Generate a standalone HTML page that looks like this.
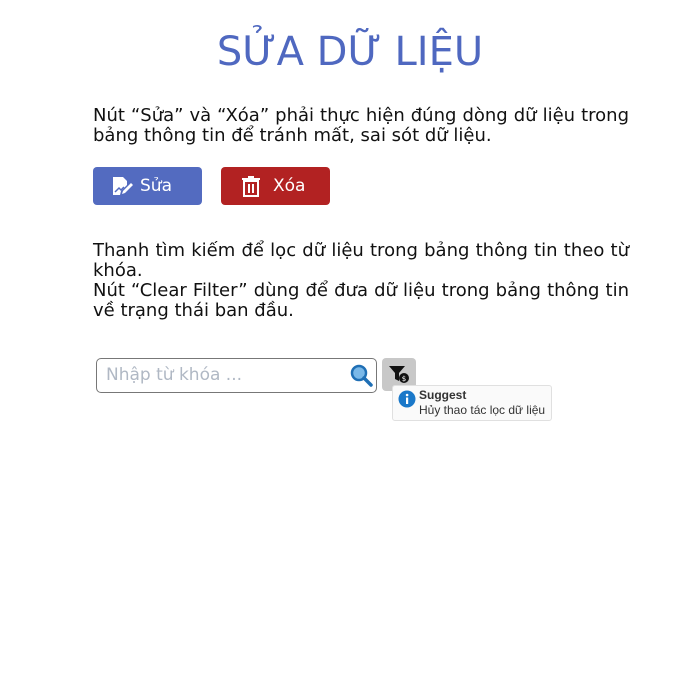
<!DOCTYPE html>
<html><head><meta charset="utf-8"><style>
body{margin:0;width:700px;height:700px;background:#fff;font-family:"DejaVu Sans","Liberation Sans",sans-serif;position:relative;overflow:hidden}
.t{position:absolute;left:0;width:700px;top:29px;text-align:center;font-size:40px;color:#4f68c0;font-family:"DejaVu Sans",sans-serif}
.p{position:absolute;left:93px;width:536px;font-size:18px;line-height:20px;color:#111;text-align:justify}
.b{position:absolute;top:167px;height:38px;border-radius:4px;color:#fff;font-size:17px;display:flex;align-items:center}
</style></head><body>
<div class="t">SỬA DỮ LIỆU</div>
<div class="p" style="top:106px">Nút “Sửa” và “Xóa” phải thực hiện đúng dòng dữ liệu trong bảng thông tin để tránh mất, sai sót dữ liệu.</div>
<div class="b" style="left:93px;width:109px;background:#536bc0">
<svg style="position:absolute;left:19px;top:10px" width="22" height="19" viewBox="0 0 22 19"><path d="M1 0h10l4 4v4l-6 6-1 4H1z" fill="#fff"/><path d="M3 15l4-4 2 2 3-3" stroke="#536bc0" stroke-width="1.5" fill="none"/><path d="M11 14l8-8 2 2-8 8-3 1z" fill="#fff"/></svg>
<span style="position:absolute;left:47px">Sửa</span></div>
<div class="b" style="left:221px;width:109px;background:#b22222">
<svg style="position:absolute;left:20px;top:8px" width="20" height="22" viewBox="0 0 20 22"><path d="M7 1h6v2h6v2H1V3h6z" fill="#fff"/><path d="M3 6h14v15H3z" fill="none" stroke="#fff" stroke-width="2"/><path d="M8 9v9M12 9v9" stroke="#fff" stroke-width="2"/></svg>
<span style="position:absolute;left:52px">Xóa</span></div>
<div class="p" style="top:241px">Thanh tìm kiếm để lọc dữ liệu trong bảng thông tin theo từ khóa.<br>Nút “Clear Filter” dùng để đưa dữ liệu trong bảng thông tin về trạng thái ban đầu.</div>
<div style="position:absolute;left:96px;top:358px;height:33px;border:1px solid #777;border-radius:5px;font-size:17px;color:#b0b8c4;line-height:33px;padding-left:9px;width:270px">Nhập từ khóa ...</div>
<svg style="position:absolute;left:350px;top:364px" width="23" height="23" viewBox="0 0 23 23"><circle cx="9" cy="9" r="7" fill="#7ab8e8" stroke="#1f6fb5" stroke-width="2.5"/><path d="M14 14l7 7" stroke="#1f6fb5" stroke-width="3.5" stroke-linecap="round"/></svg>
<div style="position:absolute;left:382px;top:358px;width:34px;height:33px;background:#c8c8c8;border-radius:4px"></div>
<svg style="position:absolute;left:389px;top:366px" width="22" height="18" viewBox="0 0 22 18"><path d="M0 0h16l-6 7v8l-4-2V7z" fill="#111"/><circle cx="15" cy="12" r="5" fill="#111"/><text x="15" y="15" font-size="7" fill="#fff" text-anchor="middle">$</text></svg>
<div style="position:absolute;left:392px;top:385px;width:158px;height:34px;background:#fafafa;border:1px solid #e0e0e0;border-radius:3px;font-family:'Liberation Sans',sans-serif">
<svg style="position:absolute;left:5px;top:4px" width="18" height="18" viewBox="0 0 18 18"><circle cx="9" cy="9" r="8.5" fill="#1a78c9"/><rect x="8" y="7.5" width="2.2" height="6.5" fill="#fff"/><circle cx="9.1" cy="5" r="1.3" fill="#fff"/></svg>
<div style="position:absolute;left:26px;top:2px;font-size:12px;font-weight:bold;color:#333">Suggest</div>
<div style="position:absolute;left:26px;top:17px;font-size:12px;color:#333">Hủy thao tác lọc dữ liệu</div>
</div>
</body></html>
